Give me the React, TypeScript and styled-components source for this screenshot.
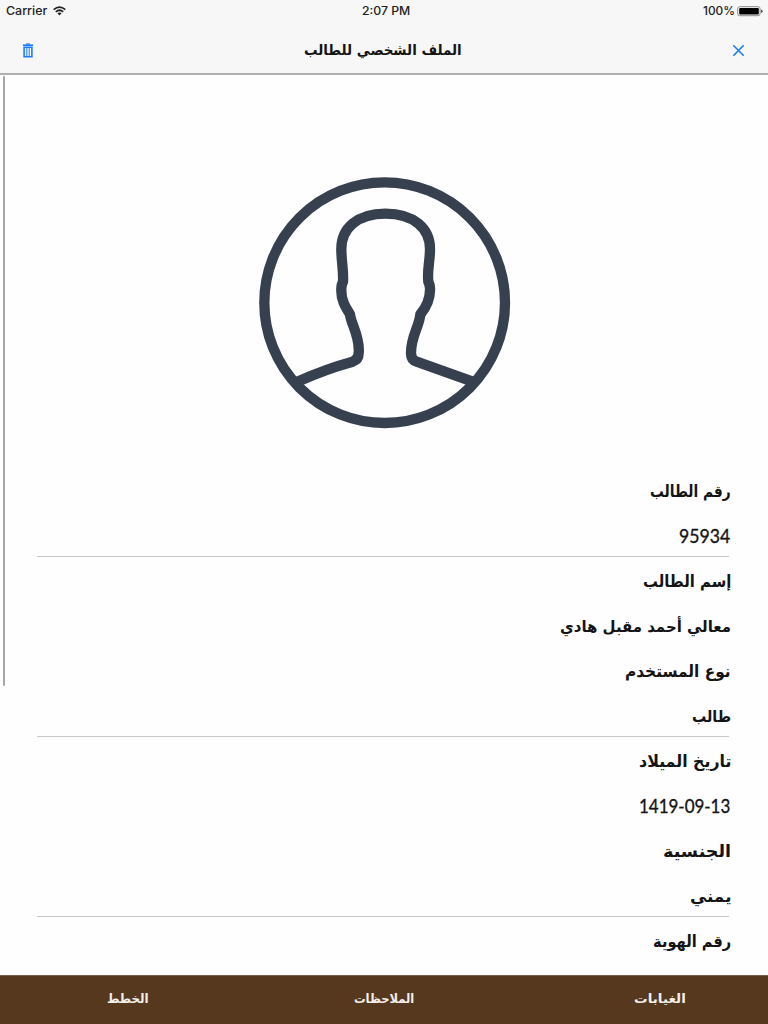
import React, { useLayoutEffect, useRef, useState } from 'react';
import styled, { createGlobalStyle } from 'styled-components';

const GlobalStyle = createGlobalStyle`
  * { box-sizing: border-box; }
  body { margin: 0; background: #fefefe; overflow: hidden; }
`;

const Screen = styled.div`
  width: 768px;
  height: 1024px;
  display: flex;
  flex-direction: column;
  overflow: hidden;
  background: #fefefe;
  color: #141414;
  font-family: 'DejaVu Sans', sans-serif;
`;

const Header = styled.header`
  height: 75px;
  flex: none;
  background: #f7f7f7;
  border-bottom: 2px solid #b0b0b0;
`;

const StatusBar = styled.div`
  height: 22px;
  padding: 0 5px 0 6px;
  display: grid;
  grid-template-columns: 1fr auto 1fr;
  align-items: center;
  font: 500 11.5px/22px Inter, sans-serif;
  color: #222;
`;

const Clock = styled.div`
  padding-left: 3px;
`;

const StatusGroup = styled.div<{ $end?: boolean }>`
  display: flex;
  align-items: center;
  gap: ${p => (p.$end ? 2 : 6)}px;
  justify-content: ${p => (p.$end ? 'flex-end' : 'flex-start')};
`;

const NavBar = styled.div`
  height: 51px;
  padding: 5px 23px 0 21px;
  display: flex;
  align-items: center;
  justify-content: space-between;
`;

const IconButton = styled.button`
  border: 0;
  padding: 0;
  width: 14px;
  height: 18px;
  background: none;
  color: #1a7bff;
  display: flex;
  align-items: center;
  justify-content: center;
`;

const Title = styled.h1`
  margin: 0;
  font-size: 14.5px;
  line-height: 24px;
`;

const Content = styled.main`
  flex: 1;
  min-height: 0;
  display: flex;
  overflow: hidden;
`;

const ScrollThumb = styled.div`
  width: 2px;
  height: 610px;
  margin: 1px 0 0 3px;
  border-radius: 1px;
  background: #a6a6a6;
  flex: none;
`;

const Profile = styled.div`
  flex: 1;
  padding: 90px 39px 0 32px;
  display: flex;
  flex-direction: column;
`;

const Avatar = styled.svg`
  width: 270px;
  height: 275px;
  margin-left: 213px;
  flex: none;
`;

const Fields = styled.dl`
  margin: 27px 0 0;
`;

const Field = styled.div<{ $line: boolean }>`
  height: 90px;
  border-bottom: 1.5px solid ${p => (p.$line ? '#c8c8c8' : 'transparent')};
`;

const Label = styled.dt`
  height: 45px;
  display: flex;
  justify-content: flex-end;
  align-items: center;
  padding-top: 3px;
  font-size: 16.5px;
  font-weight: 700;
  margin-right: -2px;
`;

const Value = styled.dd<{ $latin: boolean }>`
  height: 45px;
  margin: 0 ${p => (p.$latin ? -1 : -2)}px 0 0;
  display: flex;
  justify-content: flex-end;
  align-items: center;
  padding-top: ${p => (p.$latin ? 1 : 3)}px;
  font-family: ${p => (p.$latin ? 'Lato, sans-serif' : "'DejaVu Sans', sans-serif")};
  font-size: ${p => (p.$latin ? 19 : 16)}px;
  font-weight: ${p => (p.$latin ? 400 : 700)};
  -webkit-text-stroke: ${p => (p.$latin ? '0.35px #141414' : '0')};
`;

const TabBar = styled.nav`
  height: 49px;
  flex: none;
  display: grid;
  grid-template-columns: 256px 256px 256px;
  background: #56381e;
  border-top: 1px solid #765f4a;
`;

const Tab = styled.button<{ $shift?: number }>`
  border: 0;
  background: none;
  padding: 0 ${p => Math.max(0, -(p.$shift ?? 0))}px 3px ${p => Math.max(0, p.$shift ?? 0)}px;
  display: flex;
  align-items: center;
  justify-content: center;
  color: #f3efeb;
  font: 700 12.5px 'DejaVu Sans', sans-serif;
`;

const FitBox = styled.span`
  display: flex;
  justify-content: flex-end;
  white-space: nowrap;
`;

const FitInk = styled.span`
  flex: none;
  transform-origin: right center;
`;

/* Condenses a line of text horizontally to the given advance width. */
function Fit({ width, rtl = true, children }: { width: number; rtl?: boolean; children: string }) {
  const ref = useRef<HTMLSpanElement>(null);
  const [scale, setScale] = useState(1);
  useLayoutEffect(() => {
    if (ref.current) setScale(width / ref.current.offsetWidth);
  }, [width, children]);
  return (
    <FitBox style={{ width }}>
      <FitInk ref={ref} dir={rtl ? 'rtl' : 'ltr'} style={{ transform: `scaleX(${scale})` }}>
        {children}
      </FitInk>
    </FitBox>
  );
}

const fields = [
  { label: 'رقم الطالب', lw: 81, value: '95934', vw: 51, latin: true, line: true },
  { label: 'إسم الطالب', lw: 88, value: 'معالي أحمد مقبل هادي', vw: 171, latin: false, line: false },
  { label: 'نوع المستخدم', lw: 106, value: 'طالب', vw: 39, latin: false, line: true },
  { label: 'تاريخ الميلاد', lw: 92, value: '1419-09-13', vw: 91, latin: true, line: false },
  { label: 'الجنسية', lw: 68, value: 'يمني', vw: 41, latin: false, line: true },
  { label: 'رقم الهوية', lw: 78, value: '', vw: 0, latin: false, line: false },
];

function WifiIcon() {
  return (
    <svg width="13" height="10" viewBox="0 0 13 10" fill="none" stroke="#222" strokeWidth="1.7">
      <path d="M.7 3.7Q6.5-1.3 12.3 3.7M2.8 5.8Q6.5 2.7 10.2 5.8" />
      <path d="M4.4 7.3Q6.5 5.7 8.6 7.3L6.5 9.6Z" fill="#222" stroke="none" />
    </svg>
  );
}

function BatteryIcon() {
  return (
    <svg width="26" height="11" viewBox="0 0 26 11">
      <rect x=".7" y=".7" width="22.4" height="9" rx="2" fill="none" stroke="#8a8a8a" />
      <rect x="2.2" y="2" width="19.6" height="6.4" rx="1" fill="#000" />
      <path d="M24 3.4Q25.7 3.9 25.7 5.2T24 7Z" fill="#555" />
    </svg>
  );
}

function TrashIcon() {
  return (
    <svg width="12" height="15" viewBox="0 0 12 15" fill="none" stroke="currentColor">
      <path d="M1 2.2H11" strokeWidth="1.6" />
      <path d="M4 1H8" strokeWidth="1.2" />
      <path d="M2.1 4.3H9.9V13.7H2.1Z" strokeWidth="1.6" />
      <path d="M4.8 5V13M7.2 5V13" strokeWidth="1" />
    </svg>
  );
}

function CloseIcon() {
  return (
    <svg width="13" height="13" viewBox="0 0 13 13" fill="none" stroke="currentColor" strokeWidth="1.6">
      <path d="M1.3 1.3 11.7 11.7M11.7 1.3 1.3 11.7" />
    </svg>
  );
}

export default function App() {
  return (
    <Screen>
      <GlobalStyle />
      <Header>
        <StatusBar>
          <StatusGroup><Fit width={41} rtl={false}>Carrier</Fit><WifiIcon /></StatusGroup>
          <Clock><Fit width={48} rtl={false}>2:07 PM</Fit></Clock>
          <StatusGroup $end><Fit width={32} rtl={false}>100%</Fit><BatteryIcon /></StatusGroup>
        </StatusBar>
        <NavBar>
          <IconButton aria-label="حذف"><TrashIcon /></IconButton>
          <Title><Fit width={158}>الملف الشخصي للطالب</Fit></Title>
          <IconButton aria-label="إغلاق"><CloseIcon /></IconButton>
        </NavBar>
      </Header>
      <Content>
        <ScrollThumb />
        <Profile>
          <Avatar viewBox="0 0 810 825" fill="none" stroke="#36404e" strokeWidth="31">
            <circle cx="404" cy="413" r="361" />
            <path
              strokeLinejoin="round"
              d="M142 650C205 622 260 603 308 590Q326 584 326 565C331 515 302 475 300 448C286 425 273 405 274 375Q273 362 279 350C281 315 274 290 274 252C274 190 322 146 406 146C491 146 540 190 540 252C540 290 531 315 535 350Q541 362 540 375C540 405 526 430 511 448C508 485 482 515 483 565Q483 584 500 590L668 650"
            />
          </Avatar>
          <Fields>
            {fields.map(f => (
              <Field key={f.label} $line={f.line}>
                <Label><Fit width={f.lw}>{f.label}</Fit></Label>
                {f.value && (
                  <Value $latin={f.latin}><Fit width={f.vw} rtl={!f.latin}>{f.value}</Fit></Value>
                )}
              </Field>
            ))}
          </Fields>
        </Profile>
      </Content>
      <TabBar>
        <Tab><Fit width={42}>الخطط</Fit></Tab>
        <Tab><Fit width={60}>الملاحظات</Fit></Tab>
        <Tab $shift={40}><Fit width={52}>الغيابات</Fit></Tab>
      </TabBar>
    </Screen>
  );
}
